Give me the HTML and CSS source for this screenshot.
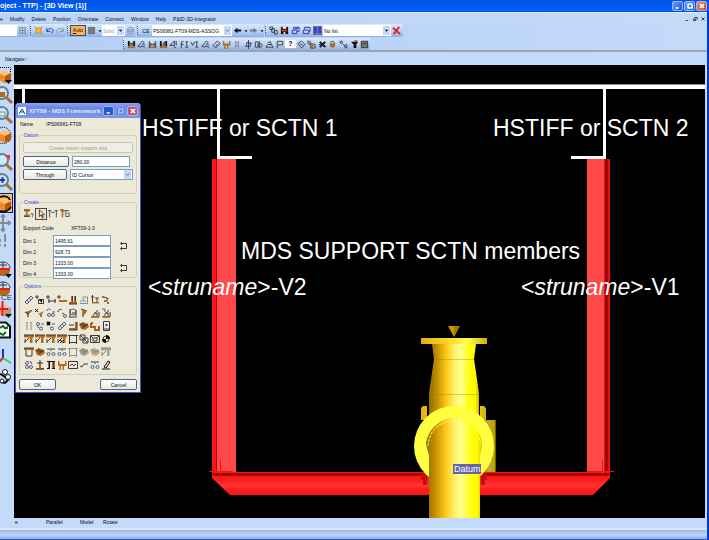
FILE: index.html
```html
<!DOCTYPE html>
<html lang="en">
<head>
<meta charset="utf-8">
<title>3D View (1)</title>
<link rel="stylesheet" href="styles.css">
</head>
<body>
<svg class="defs" aria-hidden="true">
  <symbol id="caret" viewBox="0 0 8 10"><path class="fk" d="M2 4h4l-2 2.5z"/></symbol>
  <symbol id="chev" viewBox="0 0 8 10"><path class="n" d="M2 4l2 2 2-2"/></symbol>
  <symbol id="hframe" viewBox="0 0 10 10"><path class="fo" d="M1 7h8v2H1z"/><path class="k" d="M1.5 1v8M8.5 1v8M3 5h4M3 3v4M7 3v4"/></symbol>
  <symbol id="links" viewBox="0 0 10 10"><circle class="n" cx="2.500" cy="7" r="1.500"/><circle class="n" cx="7.500" cy="7" r="1.500"/><path class="k" d="M1 2h3M6 2h3M5 1v3"/></symbol>
  <symbol id="clip" viewBox="0 0 10 10"><path class="n" d="M1 7l6-6 2 2-6 6zM3 5l2 2M5 3l2 2"/></symbol>
  <symbol id="roof" viewBox="0 0 10 10"><path class="fo" d="M0 1h10v2.500H0zM6 3h2.500v6H6z"/><path class="k" d="M0 1h10M1 8l4-4M1 5v4"/></symbol>
  <symbol id="ibeam" viewBox="0 0 10 10"><path class="fo" d="M1 7h8v2H1zM3 1h1.500v7H3zM6 1h1.500v7H6z"/><path class="k" d="M1 9h8M4.500 1v6M7.500 1v6"/></symbol>
  <symbol id="block" viewBox="0 0 10 10"><path class="fo" d="M0 3l4-2 5 2 1 3-4 3-4-1z"/><path class="k" d="M1 3l4 2 4-2M3 7l5-3M3 2l4 3"/></symbol>
  <symbol id="corner" viewBox="0 0 10 10"><path class="fo" d="M1 7h8v2H1zM7 1h2v7H7z"/><path class="k" d="M1 9h8V1M1 4h5"/></symbol>
  <symbol id="frame" viewBox="0 0 10 10"><path class="k" d="M1.500 1.500h7v7h-7zM0 1.500h3M7 1.500h3M1.500 7v3M8.500 7v3"/></symbol>
  <symbol id="tee" viewBox="0 0 10 10"><path class="fo" d="M4 2h2v6h3v1.500H1V8h3z"/><path class="k" d="M2 3h6M5 0v3M1 9h8"/></symbol>
  <symbol id="hbar" viewBox="0 0 10 10"><path class="fo" d="M1 1h1.500v3H8V1h1.500v5H7v4H5.500V6H4v4H2.500V6H1z"/></symbol>
  <symbol id="xlink" viewBox="0 0 10 10"><path class="kk" d="M1 1l3 3M4 1L1 4"/><circle class="n" cx="6" cy="7.500" r="1.500"/><path class="n" d="M6 3h3M4 6l1 1"/></symbol>
  <symbol id="rake" viewBox="0 0 10 10"><path class="k" d="M2 9L8 2M1 9h8V4M4 5h3v4"/><path class="fo" d="M2 8h7v1.500H2z"/></symbol>
  <symbol id="pen" viewBox="0 0 10 10"><path class="k" d="M1 7l5-6 2 2-4 5zM5 7l4 1M7 4l2 2"/></symbol>
  <symbol id="cube" viewBox="0 0 14 20"><path class="c1" d="M-2 7l6-3 7 3-6 3z"/><path class="c2" d="M-2 7l7 3v7l-7-3z"/><path class="c3" d="M5 10l6-3v7l-6 3z"/></symbol>
  <symbol id="lens" viewBox="0 0 14 20"><circle class="glass" cx="2" cy="7" r="6"/><path class="handle" d="M6 11l6 6"/></symbol>
  <symbol id="drum" viewBox="0 0 14 20"><path class="fo" d="M-3 10h13c0 4-3 6-7 6s-6-2-6-6z"/><path class="k" d="M-3 9c0-6 3-7 6-7s7 2 7 6M3 2v7M0 5h7"/><path class="r" d="M-3 9h13"/></symbol>
</svg>

<header class="titlebar">
  <h1>oject - TTP) - [3D View (1)]</h1>
  <div class="winbtns">
    <button class="wb" aria-label="Minimize"><svg viewBox="0 0 10 10"><path class="w" d="M2 7.500h4"/></svg></button>
    <button class="wb" aria-label="Maximize"><svg viewBox="0 0 10 10"><path class="w" d="M2.500 3v4.500h5V3M2 2.500h6"/></svg></button>
    <button class="wb close" aria-label="Close"><svg viewBox="0 0 10 10"><path class="w" d="M2.500 2.500l5 5M7.500 2.500l-5 5"/></svg></button>
  </div>
</header>

<div class="shell">
  <nav class="menubar">
    <a href="#">e</a><a href="#">Modify</a><a href="#">Delete</a><a href="#">Position</a><a href="#">Orientate</a><a href="#">Connect</a><a href="#">Window</a><a href="#">Help</a><a href="#">P&amp;ID-3D-Integrator</a>
    <span class="mdi">
      <button aria-label="Minimize view"><svg viewBox="0 0 8 8"><path class="kk" d="M2 6h3"/></svg></button>
      <button aria-label="Restore view"><svg viewBox="0 0 8 8"><path class="kk" d="M3 2h4v3M2 4h3v2H2z"/></svg></button>
      <button aria-label="Close view"><svg viewBox="0 0 8 8"><path class="kk" d="M2 2l4 4M6 2L2 6"/></svg></button>
    </span>
  </nav>

  <div class="bars">
    <div class="bar">
      <div class="group first">
        <input class="crumb" aria-label="Level">
        <button class="tb" aria-label="Storage"><svg viewBox="0 0 10 10"><path class="g" d="M2 1v8M5 1v8M8 1v8M1 2h8M1 5h8M1 8h8"/></svg></button>
      </div>
      <div class="group">
        <i class="grip"></i>
        <button class="tb" aria-label="Refresh"><svg viewBox="0 0 10 10"><path class="n" d="M1 1l8 8M9 1L1 9"/><circle class="sun" cx="5" cy="5" r="3"/></svg></button>
        <button class="tb" aria-label="Undo"><svg viewBox="0 0 10 10"><path class="b" d="M2 2v4h4M2 6c2-4 6-4 7-1 0 2-1 3-2 3"/></svg></button>
        <button class="tb" aria-label="Redo"><svg viewBox="0 0 10 10"><path class="g" d="M8 2v4H4M8 6C6 2 2 2 1 5c0 2 1 3 2 3"/></svg></button>
      </div>
      <div class="group">
        <i class="grip"></i>
        <button class="auto"><u>A</u>uto</button>
        <button class="tb" aria-label="Colour"><svg viewBox="0 0 10 10"><path class="fg" d="M1 1h8v8H1z"/></svg></button>
        <button class="tiny" aria-label="Colour menu"><svg viewBox="0 0 8 10"><use href="#caret"/></svg></button>
        <label class="combo solid"><select aria-label="Fill" disabled><option>Solid</option></select><svg viewBox="0 0 8 10"><use href="#caret"/></svg></label>
        <button class="tb" aria-label="Translucency"><svg viewBox="0 0 10 10"><path class="g" d="M2 3c0-2 6-2 6 0v4c0 2-6 2-6 0zM2 3c0 2 6 2 6 0M2 5c0 2 6 2 6 0"/></svg></button>
      </div>
      <div class="group">
        <i class="grip"></i>
        <label class="ce" for="ce">CE</label>
        <span class="combo item"><select id="ce"><option>PS06981-FT09-MDS-ASSOG</option></select><svg viewBox="0 0 8 10"><use href="#chev"/></svg></span>
        <button class="tb" aria-label="Back"><svg viewBox="0 0 10 10"><path class="fk" d="M1 5l4-3v2h4v2H5v2z"/></svg></button>
        <button class="tiny" aria-label="Back list"><svg viewBox="0 0 8 10"><use href="#caret"/></svg></button>
        <button class="tb" aria-label="Forward"><svg viewBox="0 0 10 10"><path class="fg" d="M9 5L5 2v2H1v2h4v2z"/></svg></button>
        <button class="tiny" aria-label="Forward list"><svg viewBox="0 0 8 10"><use href="#caret"/></svg></button>
      </div>
      <div class="group last">
        <i class="grip"></i>
        <button class="tb" aria-label="Copy"><svg viewBox="0 0 10 10"><path class="k" d="M1 1h3v3H1zM3 3h3v4H3zM6 5h3v4H6z"/></svg></button>
        <button class="tb" aria-label="Save"><svg viewBox="0 0 10 10"><path class="fk" d="M1 1h8v8H1z"/><path class="fr" d="M2 4h6v2H2z"/><path class="fw" d="M3 1h4v2H3zM4 7h2v2H4z"/></svg></button>
        <button class="tb" aria-label="Add to list"><svg viewBox="0 0 10 10"><path class="b" d="M1.500 4.500h5v4h-5zM3 4V1.500h6V6H7M4 3h4"/></svg></button>
        <button class="tb" aria-label="Remove from list"><svg viewBox="0 0 10 10"><path class="b" d="M1.500 4.500h6v4h-6zM3 4V1.500h6V6H8"/></svg></button>
        <button class="tb" aria-label="Columns"><svg viewBox="0 0 10 10"><path class="fg" d="M0 0h10v10H0z"/><path class="fb" d="M1 1h3v7H1zM6 1h3v7H6z"/></svg></button>
        <label class="combo list"><select aria-label="List"><option>No list</option></select><svg viewBox="0 0 8 10"><use href="#caret"/></svg></label>
        <button class="tb" aria-label="Clear list"><svg viewBox="0 0 10 10"><path class="r" d="M1 2l8 7M8 1L2 9"/></svg></button>
      </div>
    </div>
    <div class="bar second">
      <div class="group tools">
        <i class="grip"></i>
        <button class="tb" aria-label="Frame"><svg viewBox="0 0 10 10"><path class="kk" d="M2 1v6M8 1v6"/><path class="k" d="M4.500 3v4M6.500 3v4M2 4h6"/><path class="fo" d="M1 7h8v2H1z"/></svg></button>
        <button class="tb" aria-label="Edit pen"><svg><use href="#pen"/></svg></button>
        <button class="tb" aria-label="Frame levels"><svg><use href="#hframe"/></svg></button>
        <button class="tb" aria-label="Frame corner"><svg viewBox="0 0 10 10"><path class="kk" d="M2 1v7M8 1v7"/><path class="k" d="M4 6l2-4v4z"/><path class="fo" d="M1 7h8v2H1z"/></svg></button>
        <button class="tb" aria-label="Draw"><svg viewBox="0 0 10 10"><path class="k" d="M1 6l5-5v5zM5 7l3 2M8 1v5"/></svg></button>
        <button class="tb" aria-label="Flange tag"><svg viewBox="0 0 10 10"><path class="k" d="M1.500 9V2H4M1 5h3M6 2h3M7.500 2v6M6 8h3"/></svg></button>
        <button class="tb" aria-label="Valve tag"><svg viewBox="0 0 10 10"><path class="k" d="M1 2l2 4 2-4M6 2h3M7.500 2v6M6 8h3"/></svg></button>
        <button class="tb" aria-label="Brush"><svg><use href="#pen"/></svg></button>
        <button class="tb" aria-label="Clip"><svg viewBox="0 0 10 10"><path class="k" d="M1 6l5-5 3 3-5 5zM4 7l3-3"/></svg></button>
        <button class="tb" aria-label="Bracket"><svg><use href="#hbar"/></svg></button>
        <button class="tb" aria-label="Rail"><svg viewBox="0 0 10 10"><path class="g" d="M3 1v8M6 1v8M3 3h3M3 6h3"/></svg></button>
        <button class="tb" aria-label="Centre"><svg viewBox="0 0 10 10"><path class="k" d="M3 3v4h4V3zM5 0v10M1 7h2M7 4h2"/></svg></button>
        <button class="tb" aria-label="Cylinder"><svg viewBox="0 0 10 10"><path class="k" d="M1.500 2v6h3V2zM6 1v8"/><circle class="k" cx="7" cy="6" r="2"/></svg></button>
        <button class="tb" aria-label="Weld"><svg viewBox="0 0 10 10"><path class="k" d="M1 8h8L7 5H3zM3 3l3-1 1 3"/></svg></button>
        <button class="tb" aria-label="Flag"><svg viewBox="0 0 10 10"><path class="k" d="M2.500 9V1.500h6v4h-6"/></svg></button>
        <button class="tb q" aria-label="Help">?</button>
        <button class="tb" aria-label="Plane"><svg viewBox="0 0 10 10"><path class="k" d="M1 4l4-3 4 4-4 4zM3 4l4 2"/></svg></button>
        <button class="tb" aria-label="Pick block"><svg viewBox="0 0 10 10"><path class="k" d="M1 1l3 1-1 3-2-1zM4 4l5 1v4H4z"/><path class="fo" d="M4 5h3v4H4z"/></svg></button>
        <button class="tb" aria-label="Break"><svg viewBox="0 0 10 10"><path class="kk" d="M2 2l6 6M8 2L2 8"/><path class="k" d="M1 5h3M6 7h3"/></svg></button>
        <button class="tb" aria-label="Lock"><svg viewBox="0 0 10 10"><path class="k" d="M3 5V3c0-2 4-2 4 0v2"/><path class="fo" d="M2 4h6v3L5 9 2 7z"/></svg></button>
        <button class="tb" aria-label="Chain"><svg viewBox="0 0 10 10"><path class="k" d="M1 2l2-1 1 2-2 1zM4 4l2 2M6 6l2-1 1 3-2 1z"/></svg></button>
        <button class="tb" aria-label="Bucket"><svg viewBox="0 0 10 10"><path class="fk" d="M1 2h8L7 5v4H4V5z"/><path class="fo" d="M5 0h3v2H5z"/></svg></button>
        <button class="tb" aria-label="Sheet"><svg viewBox="0 0 10 10"><path class="fg" d="M1 1h8v8H1z"/><path class="k" d="M1.500 1.500h7v7h-7zM3 4h4"/></svg></button>
      </div>
    </div>
  </div>

  <div class="navigate">Navigate :</div>

  <main class="work">
    <div class="side">
      <button aria-label="Select view"><svg viewBox="0 0 14 20"><path class="dot" d="M0 1.500h10.500V15"/><use href="#cube"/><path class="fk" d="M5 14h7l-3.500 4z"/></svg></button>
      <button aria-label="Zoom element"><svg viewBox="0 0 14 20"><use href="#lens"/><path class="fo" d="M0 6h5v5H0z"/></svg></button>
      <button aria-label="Zoom window"><svg viewBox="0 0 14 20"><use href="#lens"/><path class="g" d="M0 6h5v4H0"/></svg></button>
      <button aria-label="Fit"><svg viewBox="0 0 14 20"><path class="dot" d="M0 2c6-3 11 3 11 8s-5 9-11 7"/><use href="#cube"/></svg></button>
      <i class="gap"></i>
      <button aria-label="Zoom area"><svg viewBox="0 0 14 20"><use href="#lens"/><path class="fr" d="M5 2h5v5z"/></svg></button>
      <button aria-label="Zoom in"><svg viewBox="0 0 14 20"><use href="#lens"/><path class="b2" d="M0 7h5M2.500 4v6"/></svg></button>
      <button class="on" aria-label="Rotate"><svg viewBox="0 0 14 20"><use href="#cube"/><path class="kk" d="M0 3c5-2 9 0 10 3M11 13c-3 5-7 5-11 4"/></svg></button>
      <button aria-label="Pan"><svg viewBox="0 0 14 20"><path class="g2" d="M3 2v16M-4 10h14M1 4l2-2 2 2M1 16l2 2 2-2M8 8l2 2-2 2"/></svg></button>
      <button class="short" aria-label="Walk"><svg viewBox="0 0 14 16"><path class="g2" d="M5 1v8M5 11v3M0 6v3M0 11v2"/></svg></button>
      <i class="gap wide"></i>
      <button aria-label="Limits"><svg viewBox="0 0 14 20"><use href="#drum"/><path class="fk" d="M5 14h7l-3.500 4z"/></svg></button>
      <button aria-label="Limits CE"><svg viewBox="0 0 14 20"><use href="#drum"/><text class="cetext" x="1" y="20">CE</text></svg></button>
      <button aria-label="Clip box"><svg viewBox="0 0 14 20"><use href="#cube" opacity=".55"/><path class="r" d="M2.500 1v15M0 9h8"/><path class="fk" d="M5 14h7l-3.500 4z"/></svg></button>
      <button aria-label="Redraw"><svg viewBox="0 0 14 20"><path class="sheet" d="M-1 2.500h7l4 4V17.500H-1z"/><path class="gr" d="M0 8l3-2 3 3M6 12l-3 3-3-2"/><path class="fgr" d="M4 9h4V5zM-1 11v4h3z"/></svg></button>
      <i class="gap"></i>
      <button aria-label="Axes"><svg viewBox="0 0 14 20"><path class="b2" d="M3 2v9"/><path class="r" d="M3 11l-4 4"/><path class="gl" d="M3 11l8 5"/></svg></button>
      <button aria-label="Measure"><svg viewBox="0 0 14 20"><path class="kk" d="M0 7l4 2 4 4M1 15l4 1 4-4"/><circle class="node" cx="5" cy="5" r="2.500"/><circle class="node" cx="8" cy="10" r="2.500"/><circle class="node" cx="2" cy="14" r="2"/></svg></button>
    </div>

    <svg class="scene" viewBox="14 65 691 453" preserveAspectRatio="xMinYMin slice" role="img" aria-label="3D view">
      <defs>
        <linearGradient id="pipe"><stop offset="0" stop-color="#8c6c00"/><stop offset=".16" stop-color="#c49000"/><stop offset=".35" stop-color="#ffc81c"/><stop offset=".5" stop-color="#fff060"/><stop offset=".62" stop-color="#ffff98"/><stop offset=".8" stop-color="#ffff10"/><stop offset=".93" stop-color="#fff800"/><stop offset="1" stop-color="#d0b000"/></linearGradient>
        <linearGradient id="flange"><stop offset="0" stop-color="#e0b010"/><stop offset=".5" stop-color="#ffe030"/><stop offset=".7" stop-color="#ffff50"/><stop offset="1" stop-color="#d0b000"/></linearGradient>
        <linearGradient id="beam" x2="0" y2="1"><stop offset="0" stop-color="#f81010"/><stop offset=".3" stop-color="#ff1c1c"/><stop offset=".6" stop-color="#ff3434"/><stop offset=".8" stop-color="#ff1818"/></linearGradient>
      </defs>
      <path class="steel" d="M14 85h691v4H14zM22 89h3v20h-3zM217 89h3v67h32v3h-35zM603 89h3v70h-35v-3h32z"/>
      <path class="edge" d="M14 84.500h691"/>
      <path fill="#f01818" d="M212 159h6v313h-6z"/><path fill="#ff4848" d="M217 159h19v313h-19z"/><path stroke="#c00000" d="M216.500 159v313"/>
      <path fill="#ff4848" d="M587 159h17v313h-17z"/><path fill="#e01010" d="M604 159h6v313h-6z"/><path stroke="#800000" stroke-width="2" d="M606.500 159v313"/>
      <path fill="url(#beam)" d="M212 472h398v6l-17 17H230l-18-17z"/>
      <path stroke="#780000" stroke-width="2" d="M213 474.500h396"/><path stroke="#ff1010" d="M209 471.500h24M587 471.500h27M220.500 460v22M602.500 460v22M230 494.500h363"/>
      <path fill="#c01010" d="M421 474h6v11h-4v-5h-2zM481 474h6v6h-2v5h-4z"/>
      <path fill="#c89600" d="M448 326h12l-6 11z"/><path fill="#806000" d="M454 326h6l-6 11z" opacity=".5"/>
      <path fill="url(#flange)" d="M421 338h66v6h-66z"/>
      <path fill="url(#pipe)" d="M432 344h44l-2 15 5 34v30h-50v-30l5-34z"/>
      <path stroke="#a07800" stroke-opacity=".35" d="M434 359.500h40M429 394.500h50"/>
      <path fill="url(#pipe)" d="M480 420h15.500v52H480z"/><path fill="#806000" opacity=".55" d="M484 420h11.500v52H480z"/>
      <path fill="url(#flange)" d="M421 408l2-2h4v14h-6zM480 406h4l2 2v12h-6z"/>
      <circle fill="#ffff40" cx="454" cy="446" r="40"/>
      <path fill="url(#pipe)" d="M429 518v-62l-3-12c2-15 14-26 28-26s27 11 28 26l-2 12v62z"/>
      <path fill="none" stroke="#ffff50" stroke-dasharray="3 1" d="M428 446c1-16 12-25 26-25s25 9 27 25"/>
      <path fill="#6464a8" d="M453 464h28v10h-28z"/>
      <text class="datum" x="454" y="472">Datum</text>
      <g class="label">
        <text x="142" y="136">HSTIFF or SCTN 1</text>
        <text x="493" y="136">HSTIFF or SCTN 2</text>
        <text x="241" y="259">MDS SUPPORT SCTN members</text>
        <text x="148" y="295">&lt;<tspan class="it">struname</tspan>&gt;-V2</text>
        <text x="521" y="295">&lt;<tspan class="it">struname</tspan>&gt;-V1</text>
      </g>
    </svg>

    <form class="dialog">
      <div class="dtitle">
        <svg viewBox="0 0 8 8"><path class="fw" d="M0 0h8v8H0z"/><path class="b" d="M1 7l3-5 3 5M3 5h3"/></svg>
        <h2>XFT09 - MDS Framework</h2>
        <button type="button" class="wb" aria-label="Minimize form"><svg viewBox="0 0 10 10"><path class="w" d="M2 7.500h4"/></svg></button>
        <button type="button" class="wb dim" aria-label="Maximize form"><svg viewBox="0 0 10 10"><path class="w" d="M2.500 2.500h5v5h-5z"/></svg></button>
        <button type="button" class="wb red" aria-label="Close form"><svg viewBox="0 0 10 10"><path class="w" d="M2.500 2.500l5 5M7.500 2.500l-5 5"/></svg></button>
      </div>
      <div class="dbody">
        <div class="name"><span>Name</span><span>/PS06981-FT09</span></div>
        <fieldset class="datumset"><legend>Datum</legend>
          <button type="button" class="btn" disabled>Create datum support atta</button>
          <div class="pair"><button type="button" class="btn">Distance</button><input aria-label="Distance" value="280.00"></div>
          <div class="pair"><button type="button" class="btn">Through</button><label class="combo cursor"><select aria-label="Through"><option>ID Cursor</option></select><svg viewBox="0 0 8 10"><use href="#chev"/></svg></label></div>
        </fieldset>
        <fieldset class="create"><legend>Create</legend>
          <div class="modes">
            <button type="button" aria-label="Section"><svg viewBox="0 0 12 12"><path class="fo" d="M0 1h7v2H4.500v4H7v2H0V7h2.500V3H0z"/><path class="k" d="M0 1h7M0 9h7M8 7c0-2 3-2 3 0l-1 2v1"/></svg></button>
            <button type="button" class="on" aria-label="Pick"><svg viewBox="0 0 12 12"><path class="cur" d="M4 1v8l2-2 2 4 1-1-2-3h3z"/></svg></button>
            <button type="button" aria-label="Span"><svg viewBox="0 0 12 12"><path class="k" d="M2 2v8M10 2v8M0 2h4M8 2h4M4 4h4"/></svg></button>
            <button type="button" aria-label="Frame"><svg viewBox="0 0 12 12"><path class="fo" d="M1 1h4v2H4v7H2V3H1z"/><path class="k" d="M5 2h6M7 2v7h4M9 5h2v4M0 1h4"/></svg></button>
          </div>
          <div class="code"><span>Support Code</span><span>XFT09-1-3</span></div>
          <div class="dims">
            <div class="rows">
              <label for="d1">Dim 1</label><input id="d1" value="1495.61">
              <label for="d2">Dim 2</label><input id="d2" value="928.73">
              <label for="d3">Dim 3</label><input id="d3" value="1333.00">
              <label for="d4">Dim 4</label><input id="d4" value="1333.00">
            </div>
            <div class="swaps">
              <button type="button" aria-label="Swap 1 and 2"><svg viewBox="0 0 10 10"><path class="k" d="M2 2.500h5.500v5H2M3 1L1.500 2.500 3 4M3 6L1.500 7.500 3 9"/></svg></button>
              <button type="button" aria-label="Swap 3 and 4"><svg viewBox="0 0 10 10"><path class="k" d="M2 2.500h5.500v5H2M3 1L1.500 2.500 3 4M3 6L1.500 7.500 3 9"/></svg></button>
            </div>
          </div>
        </fieldset>
        <fieldset class="options"><legend>Options</legend>
          <div class="grid">
            <button type="button" aria-label="Clip"><svg><use href="#clip"/></svg></button>
            <button type="button" aria-label="Add plate"><svg viewBox="0 0 10 10"><path class="k" d="M0 2h4M2 0v4M3.500 4.500h5v4h-5z"/><path class="fk" d="M4 5h3v3z"/></svg></button>
            <button type="button" aria-label="Extend"><svg viewBox="0 0 10 10"><path class="k" d="M0 2h4M2 0v4M2 6h8M3 4v4M9 4v4"/></svg></button>
            <button type="button" aria-label="Add bar"><svg viewBox="0 0 10 10"><path class="k" d="M0 2h4M2 0v4"/><path class="fo" d="M2 5h8v2H2z"/></svg></button>
            <button type="button" aria-label="Beam"><svg><use href="#ibeam"/></svg></button>
            <button type="button" aria-label="Notch"><svg viewBox="0 0 10 10"><path class="g" d="M1 8.500h7.500V2H4v4h3M1 6h2"/></svg></button>
            <button type="button" aria-label="Raise"><svg viewBox="0 0 10 10"><path class="k" d="M1 2h3M2.500 0v8M5 3h4M7 3v5"/><path class="fo" d="M2 7h7v1.500H2z"/></svg></button>
            <button type="button" aria-label="Offset"><svg viewBox="0 0 10 10"><path class="fo" d="M1 1h2v2H1zM3 5h2v2H3zM6 7h2v2H6zM6 3h2v1H6z"/><path class="k" d="M3 2l3 1v4"/></svg></button>

            <button type="button" aria-label="Arrow beam"><svg viewBox="0 0 10 10"><path class="fo" d="M1 4l7-2-2 3H5v4H3V6z"/><path class="k" d="M1 4l3 2 4-4"/></svg></button>
            <button type="button" aria-label="Cut beam"><svg viewBox="0 0 10 10"><path class="kk" d="M0 1l3 3M3 1L0 4"/><path class="fo" d="M3 6l6-3-2 3v3H5V7z"/></svg></button>
            <button type="button" aria-label="Connect"><svg viewBox="0 0 10 10"><path class="n" d="M1 3c0-3 3-2 4-1M6 4h3"/><circle class="n" cx="3" cy="7" r="1.500"/><circle class="n" cx="7" cy="7" r="1.500"/></svg></button>
            <button type="button" aria-label="Release"><svg viewBox="0 0 10 10"><path class="k" d="M1 4c0-3 3-3 4-2M5 5l2 1"/><circle class="n" cx="8" cy="8" r="1.500"/></svg></button>
            <button type="button" aria-label="Inspect"><svg viewBox="0 0 10 10"><circle class="n" cx="5" cy="4" r="3"/><path class="k" d="M2 1v8M1 9h8M8 2v6M4 5h3"/></svg></button>
            <button type="button" aria-label="Brace"><svg viewBox="0 0 10 10"><path class="k" d="M2 1l6 2M4 2v7"/><path class="fo" d="M4 3l4-1-1 3-4 4z"/></svg></button>
            <button type="button" aria-label="Ramp"><svg><use href="#rake"/></svg></button>
            <button type="button" aria-label="Ramp cut"><svg viewBox="0 0 10 10"><path class="n" d="M1 1h3v3"/><use href="#rake"/></svg></button>

            <button type="button" aria-label="Parallel"><svg viewBox="0 0 10 10"><path class="g" d="M3 1v8M7 1v8M2 2l1-1M6 2l1-1"/></svg></button>
            <button type="button" aria-label="Chain"><svg viewBox="0 0 10 10"><circle class="n" cx="3" cy="3" r="1.500"/><circle class="n" cx="6" cy="7.500" r="1.500"/><path class="n" d="M6 3h3M2 5l2 2"/></svg></button>
            <button type="button" aria-label="Unchain"><svg><use href="#xlink"/></svg></button>
            <button type="button" aria-label="Clip side"><svg><use href="#clip"/></svg></button>
            <button type="button" aria-label="Corner"><svg><use href="#corner"/></svg></button>
            <button type="button" aria-label="Block"><svg><use href="#block"/></svg></button>
            <button type="button" aria-label="Channel"><svg viewBox="0 0 10 10"><path class="o" d="M1 2v4h4v3h4V5M1 2h2"/></svg></button>
            <button type="button" aria-label="Sheet"><svg viewBox="0 0 10 10"><path class="k" d="M2.500 .5h6v9h-6zM3 8h5"/><path class="fb" d="M4.500 3h2v2h-2z"/></svg></button>

            <button type="button" aria-label="Top left"><svg><use href="#roof"/></svg></button>
            <button type="button" aria-label="Top mid"><svg><use href="#roof"/></svg></button>
            <button type="button" aria-label="Top right"><svg><use href="#roof"/></svg></button>
            <button type="button" aria-label="Top cut"><svg viewBox="0 0 10 10"><use href="#roof"/><path class="kk" d="M3 6l4 3M7 6L3 9"/></svg></button>
            <button type="button" aria-label="Outline"><svg><use href="#frame"/></svg></button>
            <button type="button" aria-label="Outline link"><svg viewBox="0 0 10 10"><path class="k" d="M1 1h5v5H1zM4 4h5v5H4zM1 1l8 8"/></svg></button>
            <button type="button" aria-label="Outline box"><svg viewBox="0 0 10 10"><path class="k" d="M.5 1.500h9v7h-9zM3 4h4v3H3zM1 2l2 2M9 2L7 4"/></svg></button>
            <button type="button" aria-label="Gravity"><svg viewBox="0 0 10 10"><circle class="k" cx="5" cy="5" r="3"/><path class="fk" d="M5 5V1a4 4 0 0 1 4 4zM5 5v4a4 4 0 0 1-4-4z"/></svg></button>

            <button type="button" aria-label="Portal"><svg viewBox="0 0 10 10"><path class="fo" d="M0 1h10v2H0z"/><path class="k" d="M2 3v6h6V3M0 1h10"/></svg></button>
            <button type="button" aria-label="Solid"><svg><use href="#block"/></svg></button>
            <button type="button" aria-label="Links"><svg><use href="#links"/></svg></button>
            <button type="button" aria-label="Link pair"><svg><use href="#links"/></svg></button>
            <button type="button" class="faint" aria-label="Align"><svg><use href="#frame"/></svg></button>
            <button type="button" class="mono" aria-label="Group"><svg><use href="#block"/></svg></button>
            <button type="button" class="faint" aria-label="Ungroup"><svg><use href="#block"/></svg></button>
            <button type="button" class="mono" aria-label="Roof"><svg><use href="#roof"/></svg></button>

            <button type="button" aria-label="Rings"><svg viewBox="0 0 10 10"><circle class="n" cx="3" cy="3" r="1.500"/><circle class="n" cx="7" cy="7" r="1.500"/><circle class="n" cx="3" cy="7" r="1.500"/><path class="k" d="M6 1l2 3"/></svg></button>
            <button type="button" aria-label="Post"><svg><use href="#tee"/></svg></button>
            <button type="button" aria-label="Rail"><svg viewBox="0 0 10 10"><path class="fo" d="M2 2h2v6H2zM7 2h2v6H7z"/><path class="kk" d="M1 1.500h8M3.500 2v6M7 2v6M1 8.500h3M6 8.500h3"/></svg></button>
            <button type="button" aria-label="Bracket"><svg><use href="#hbar"/></svg></button>
            <button type="button" aria-label="Report"><svg viewBox="0 0 10 10"><path class="k" d="M.5 1.500h9v7h-9zM2 6l2-2 2 2 2-2"/></svg></button>
            <button type="button" aria-label="Check"><svg viewBox="0 0 10 10"><path class="k" d="M1 6l2 1 2-3h4"/></svg></button>
            <button type="button" aria-label="View"><svg><use href="#links"/></svg></button>
            <button type="button" aria-label="Edit"><svg viewBox="0 0 10 10"><path class="kk" d="M3 7l4-6 2 1-4 6zM1 9h8"/></svg></button>
          </div>
        </fieldset>
        <div class="actions"><button type="button" class="btn">OK</button><button type="button" class="btn">Cancel</button></div>
      </div>
    </form>
  </main>

  <div class="modesbar"><span>e</span><span>Parallel</span><span>Model</span><span>Rotate</span></div>
  <footer class="status"></footer>
</div>
</body>
</html>
```

FILE: styles.css
```css
* { box-sizing: border-box; }
html, body { height: 100%; }
body {
  margin: 0;
  display: flex;
  flex-direction: column;
  overflow: hidden;
  background: #0038d8;
  color: #080c14;
  font: 5px/8px "Liberation Sans", sans-serif;
}
button, input, select { font: inherit; color: inherit; margin: 0; padding: 0; min-width: 0; }
button { border: 0; background: none; display: grid; place-items: center; }
svg { display: block; overflow: visible; }
.defs { position: absolute; width: 0; height: 0; }
a { color: inherit; text-decoration: none; }

.k, .kk, .n, .g, .g2, .b, .b2, .r, .w, .o, .gr, .gl, .dot { fill: none; stroke-width: 1; }
.k { stroke: #3c3838; }
.kk { stroke: #101010; stroke-width: 2; }
.mdi .kk, .grid .kk { stroke-width: 1; }
.n { stroke: #53608c; }
.g, .g2 { stroke: #858b94; }
.g2 { stroke-width: 2; }
.b, .b2 { stroke: #2030b8; }
.b2 { stroke-width: 2; }
.r { stroke: #f01818; stroke-width: 2; }
.w { stroke: #fff; stroke-width: 2; }
.o { stroke: #a8601c; stroke-width: 2; }
.gr { stroke: #107018; stroke-width: 2; }
.gl { stroke: #30d838; stroke-width: 2; }
.dot { stroke: #000; stroke-dasharray: 1 1; }
.fk { fill: #101010; }
.fo { fill: #b46a1e; }
.fg { fill: #76787c; }
.fb { fill: #2c3cf0; }
.fr { fill: #e83828; }
.fw { fill: #fff; }
.fgr { fill: #107018; }
.sun { fill: #ffb818; stroke: #d88a10; }
.c1 { fill: #ffc070; }
.c2 { fill: #f08828; }
.c3 { fill: #b8580c; }
.glass { fill: #c8ecf8; stroke: #6c7c90; stroke-width: 2; }
.handle { stroke: #a86c38; stroke-width: 3; }
.sheet { fill: #fff; stroke: #101010; stroke-width: 2; }
.node { fill: #fff; stroke: #101010; }
.cur { fill: #fff; stroke: #202020; }
.cetext { font-size: 8px; fill: #303c50; }

.titlebar {
  flex: none;
  height: 12px;
  display: flex;
  align-items: center;
  justify-content: space-between;
  padding-right: 2px;
  background: linear-gradient(#0054e4, #0058ec 60%, #0468ff 85%, #0048d0);
  color: #fff;
}
h1, h2 { margin: 0; font: bold 6px/10px "Noto Sans", sans-serif; white-space: nowrap; }
h1 { font: bold 7px/10px "Liberation Sans", sans-serif; }
.winbtns { display: flex; gap: 1px; }
.wb {
  width: 11px;
  height: 10px;
  border: 1px solid #9cb8f4;
  border-radius: 2px;
  background: linear-gradient(135deg, #6c9cf8, #1c50d8);
}
.wb svg { width: 8px; height: 8px; }
.wb.close { background: linear-gradient(135deg, #f09070, #d83c10); }

.shell {
  flex: 1;
  min-height: 0;
  display: flex;
  flex-direction: column;
  margin-right: 2px;
  background: #c4daf9;
}
.menubar {
  flex: none;
  height: 11px;
  display: flex;
  align-items: center;
  gap: 7px;
  padding-top: 1px;
  border-top: 1px solid #e4eefc;
  background: linear-gradient(90deg, #bcd4f8, #c4daf9);
}
.mdi { display: flex; margin-left: auto; }
.mdi button { width: 8px; }
.mdi svg { width: 6px; height: 6px; }

.bars {
  flex: none;
  height: 29px;
  border-bottom: 2px solid #a0a4ac;
  background: linear-gradient(90deg, #b4cef4, #bad3f8 50%, #c4daf9);
}
.bar { display: flex; height: 14px; padding-top: 1px; }
.bar.second { height: 13px; padding-left: 123px; }
.group {
  display: flex;
  align-items: center;
  border-radius: 0 2px 2px 0;
  background: linear-gradient(#dceafc, #b4cef4 60%, #8cb0e4);
}
.group.first { width: 29px; }
.group + .group { margin-left: 1px; }
.grip { width: 3px; height: 9px; border-left: 1px dotted #40609c; }
.tb { width: 11px; height: 11px; flex: none; }
.tb svg { width: 9px; height: 9px; }
.tiny { width: 5px; height: 10px; }
.tiny svg { width: 6px; height: 8px; }
.crumb { width: 17px; height: 11px; border: 0; background: #fff; flex: none; }
.auto {
  width: 16px;
  height: 11px;
  border: 1px solid #304c88;
  background: #ffb454;
  display: block;
  line-height: 9px;
}
.combo { display: flex; align-items: center; height: 11px; background: #fff; }
.combo select { flex: 1; height: 9px; padding-left: 1px; border: 0; background: none; appearance: none; }
.combo svg { width: 7px; height: 9px; background: #c4d8fa; margin: 1px; }
.solid { width: 23px; }
.solid select { color: #a0a0a0; opacity: 1; }
.ce { width: 12px; text-align: center; }
.item { width: 80px; }
.list { width: 68px; }
.last { padding-right: 1px; }
.tools { width: 247px; }
.tools .tb { flex: 1; }
.q { background: #fff; height: 8px; font: bold 7px/8px "Liberation Sans", sans-serif; }

.navigate { flex: none; height: 13px; padding: 3px 0 0 5px; }

.work { flex: 1; min-height: 0; display: flex; position: relative; padding-right: 2px; }
.side { flex: none; width: 14px; display: flex; flex-direction: column; overflow: hidden; padding-top: 1px; }
.side button { flex: none; width: 14px; height: 20px; }
.side .short { height: 16px; }
.side button svg { width: 14px; height: 20px; }
.side .short svg { height: 16px; }
.side .on { width: 13px; border: 1px solid #101870; border-left: 0; background: #ffc070; overflow: hidden; }
.gap { flex: none; height: 7px; }
.gap.wide { height: 11px; }

.scene { flex: 1; min-width: 0; height: 100%; background: #000; overflow: hidden; }
.steel { fill: #fff; }
.edge { stroke: #909090; }
.label { fill: #fff; font: 23px "Liberation Sans", sans-serif; }
.it { font-style: italic; }
.datum { fill: #fff; font: 9px "Liberation Sans", sans-serif; }

.dialog {
  position: absolute;
  left: 15px;
  top: 38px;
  width: 126px;
  border: 1px solid #4456c4;
  border-top: 0;
  border-radius: 4px 4px 0 0;
  background: #ece9d8;
  overflow: hidden;
}
.dtitle {
  display: flex;
  align-items: center;
  gap: 1px;
  height: 15px;
  padding: 0 2px;
  background: linear-gradient(#8ca4f0, #6c88e0 30%, #7c98e8);
  color: #dce4fc;
}
.dtitle > svg { width: 8px; height: 8px; }
.dtitle h2 { flex: 1; padding-left: 2px; }
.dtitle .wb { flex: none; }
.dtitle .wb:not(.red, .dim) { background: #2c54d0; }
.dtitle .dim { opacity: .4; }
.dtitle .red { background: #c05870; }
.dbody { padding: 2px 3px; }
.name, .code { display: flex; height: 8px; }
.name { padding-left: 1px; margin-bottom: 3px; }
.name span:first-child { width: 26px; }
fieldset {
  margin: 0 0 4px;
  padding: 0 3px;
  border: 1px solid #d0d0bc;
  border-radius: 2px;
  min-width: 0;
}
legend { padding: 0 1px; color: #2450c8; line-height: 8px; }
.btn {
  height: 11px;
  border: 1px solid #48648c;
  border-radius: 2px;
  background: linear-gradient(#fff, #ece9e0);
}
.btn:disabled { width: 100%; border-color: #c8c8b8; background: #f0eee2; color: #a0a090; }
.datumset { height: 63px; }
.datumset .btn:disabled { margin: 3px 0; }
.pair { display: flex; gap: 3px; margin-bottom: 2px; }
.pair .btn { width: 46px; }
.pair input { width: 58px; }
.dialog input, .cursor { height: 11px; border: 1px solid #7c9cc0; background: #fff; }
.dialog input { padding: 0 1px; }
.cursor { width: 63px; }
.pair .cursor { flex: none; }
.create { height: 80px; }
.modes { display: flex; height: 16px; margin-top: 2px; }
.modes button { width: 12px; height: 12px; }
.modes svg { width: 10px; height: 10px; }
.modes .on { border: 1px solid #404870; background: #fce0b0; }
.code { margin-bottom: 3px; }
.code span:first-child { width: 48px; }
.dims { display: flex; gap: 8px; }
.rows { display: grid; grid-template-columns: 30px 58px; grid-auto-rows: 11px; align-items: center; }
.swaps { display: flex; flex-direction: column; justify-content: space-around; }
.swaps svg { width: 10px; height: 10px; }
.options { height: 93px; }
.grid { display: grid; grid-template-columns: repeat(8, 11px); row-gap: 3px; padding-top: 5px; }
.grid button { height: 10px; }
.grid svg { width: 10px; height: 10px; }
.grid .faint { opacity: .5; }
.grid .mono { filter: grayscale(1); opacity: .6; }
.actions { display: flex; justify-content: space-between; }
.actions .btn { width: 37px; }

.modesbar { flex: none; display: flex; height: 10px; padding: 0 0 0 15px; }
.modesbar span:nth-child(1) { width: 31px; }
.modesbar span:nth-child(2) { width: 34px; }
.modesbar span:nth-child(3) { width: 23px; }
.status {
  flex: none;
  height: 12px;
  border-top: 2px solid #dce8fa;
  border-bottom: 1px solid #2c58c8;
  background: linear-gradient(#98b8ec, #c0d6f8 50%, #8cb0e8);
}
```
